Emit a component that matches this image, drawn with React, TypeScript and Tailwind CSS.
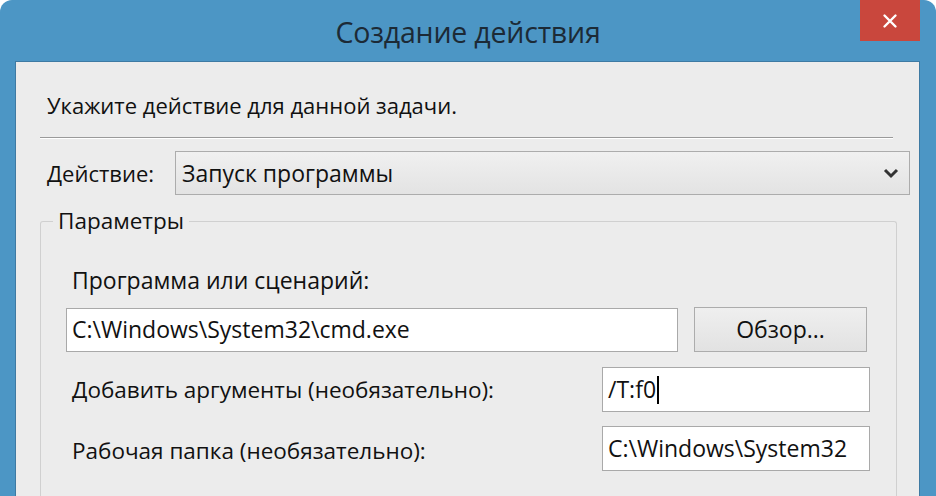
import React from 'react';

const font = "font-['Open_Sans','Noto_Sans',sans-serif]";

const TextBox = ({ value, caret, className }: { value: string; caret?: boolean; className: string }) => (
  <div className={`flex items-center bg-white border border-[#a9a9a9] pl-[5px] text-[23px] text-[#111] ${className}`}>
    <span>{value}</span>
    {caret && <span className="ml-[1px] w-[2px] h-[28px] bg-black" />}
  </div>
);

export default function App() {
  return (
    <div className={`w-[936px] h-[496px] overflow-hidden bg-[#4c96c5] rounded-t-[12px] flex flex-col ${font}`}>
      {/* title bar */}
      <div className="relative h-[61px] shrink-0 flex items-center justify-center">
        <span className="text-[28.5px] text-[#1c2a36] tracking-[-0.2px] mt-[4px]">Создание действия</span>
        <div className="absolute top-0 right-[16px] w-[60px] h-[41px] bg-[#c9473d] flex items-center justify-center">
          <svg width="16" height="16" viewBox="0 0 16 16">
            <path d="M2.5 2.5 L13.5 13.5 M13.5 2.5 L2.5 13.5" stroke="#fff" strokeWidth="2.4" strokeLinecap="round" />
          </svg>
        </div>
      </div>

      {/* dialog body */}
      <div className="ml-[15px] mr-[16px] flex-1 bg-[#ececec] border-t border-l border-r border-[#3e7aa3] flex flex-col text-[#111]">
        <div className="mt-[28px] ml-[31px] h-[30px] flex items-center text-[22px]">
          Укажите действие для данной задачи.
        </div>

        <div className="mt-[17px] ml-[24px] w-[853px] h-[2px] border-t border-[#9a9a9a] border-b border-b-white" />

        <div className="mt-[12px] flex items-center">
          <span className="ml-[31px] w-[128px] text-[22px]">Действие:</span>
          <div className="w-[735px] h-[44px] border border-[#acacac] bg-gradient-to-b from-[#f0f0f0] to-[#e3e3e3] flex items-center pl-[6px] pr-[10px] text-[23px]">
            <span className="flex-1">Запуск программы</span>
            <svg width="16" height="12" viewBox="0 0 16 12">
              <path d="M2 3 L8 9 L14 3" fill="none" stroke="#333" strokeWidth="3" />
            </svg>
          </div>
        </div>

        {/* parameters group */}
        <div className="relative mt-[26px] ml-[24px] w-[857px] flex-1 border-t border-l border-r border-[#d0d0d0] rounded-t-[3px] flex flex-col pl-[25px]">
          <span className="absolute -top-[16px] left-[12px] px-[5px] bg-[#ececec] text-[22.5px] leading-[30px]">Параметры</span>

          <div className="mt-[43px] ml-[6px] h-[30px] flex items-center text-[23px]">Программа или сценарий:</div>

          <div className="mt-[12px] flex items-center">
            <TextBox value="C:\Windows\System32\cmd.exe" className="w-[612px] h-[44px]" />
            <button className="ml-[16px] w-[173px] h-[45px] border border-[#acacac] bg-gradient-to-b from-[#efefef] to-[#e2e2e2] text-[23px] text-[#111]">
              Обзор...
            </button>
          </div>

          <div className="mt-[15px] flex items-center">
            <span className="ml-[6px] w-[530px] text-[22.5px]">Добавить аргументы (необязательно):</span>
            <TextBox value="/T:f0" caret className="w-[268px] h-[45px]" />
          </div>

          <div className="mt-[14px] flex items-center">
            <span className="ml-[6px] w-[530px] text-[22.5px] pt-[4px]">Рабочая папка (необязательно):</span>
            <TextBox value="C:\Windows\System32" className="w-[268px] h-[45px]" />
          </div>
        </div>
      </div>
    </div>
  );
}
